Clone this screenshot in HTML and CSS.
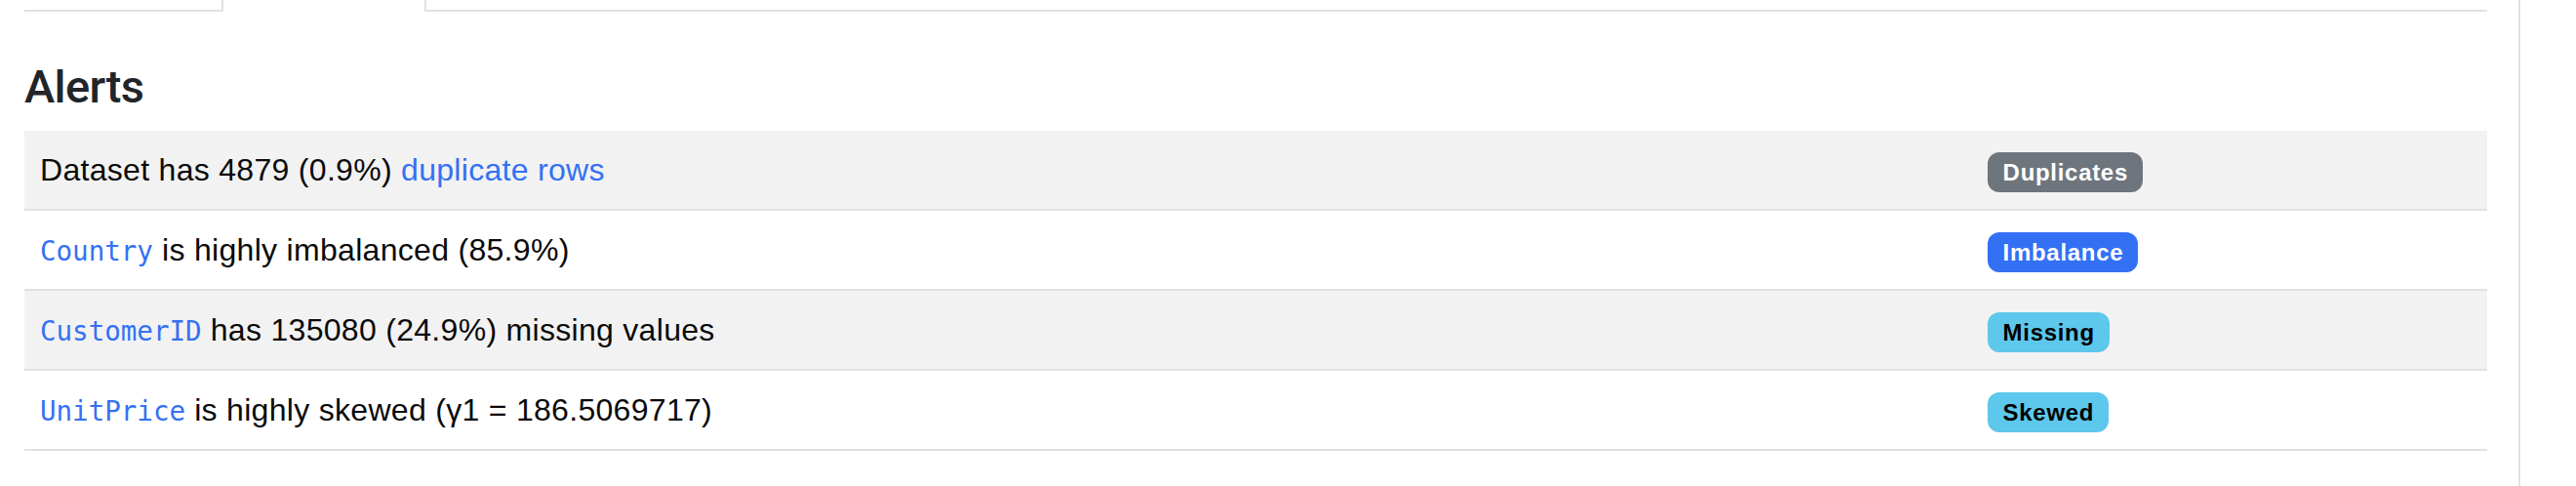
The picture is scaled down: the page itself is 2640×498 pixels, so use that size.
FILE: index.html
```html
<!DOCTYPE html>
<html lang="en">
<head>
<meta charset="utf-8">
<title>Alerts</title>
<link rel="stylesheet" href="styles.css">
</head>
<body>
<div class="page">
  <main class="main">
    <div class="tabs">
      <div class="tab"></div>
      <div class="tab active"></div>
      <div class="tab rest"></div>
    </div>
    <h2 class="title">Alerts</h2>
    <div class="alerts">
      <div class="row odd">
        <div class="msg">Dataset has 4879 (0.9%) <a class="link" href="#">duplicate rows</a></div>
        <div class="tag"><span class="badge gray">Duplicates</span></div>
      </div>
      <div class="row">
        <div class="msg"><a class="link" href="#"><code class="code">Country</code></a> is highly imbalanced (85.9%)</div>
        <div class="tag"><span class="badge blue">Imbalance</span></div>
      </div>
      <div class="row odd">
        <div class="msg"><a class="link" href="#"><code class="code">CustomerID</code></a> has 135080 (24.9%) missing values</div>
        <div class="tag"><span class="badge info">Missing</span></div>
      </div>
      <div class="row">
        <div class="msg"><a class="link" href="#"><code class="code">UnitPrice</code></a> is highly skewed (γ1 = 186.5069717)</div>
        <div class="tag"><span class="badge info">Skewed</span></div>
      </div>
    </div>
  </main>
  <div class="divider"></div>
</div>
</body>
</html>
```

FILE: styles.css
```css
html, body {
  margin: 0;
  padding: 0;
  background: #ffffff;
}

body {
  font-family: "Liberation Sans", Arial, sans-serif;
  color: #0a0a0a;
  height: 498px;
  overflow: hidden;
}

.page {
  display: flex;
  height: 498px;
}

.main {
  width: 2524px;
  margin-left: 25px;
  flex: none;
}

.divider {
  width: 2px;
  margin-left: 32px;
  background: #dee2e6;
  flex: none;
}

.tabs {
  display: flex;
  height: 12px;
}

.tab {
  box-sizing: border-box;
  width: 202px;
  border-bottom: 2px solid #dee2e6;
}

.tab.active {
  width: 210px;
  border-bottom: none;
  border-left: 2px solid #dee2e6;
  border-right: 2px solid #dee2e6;
}

.tab.rest {
  flex: 1;
  width: auto;
}

.title {
  margin: 48px 0 16px;
  font-family: Roboto, "Liberation Sans", sans-serif;
  font-size: 47px;
  line-height: 57.6px;
  height: 57.6px;
  font-weight: 500;
  color: #212529;
  letter-spacing: -0.6px;
}

.row {
  display: grid;
  grid-template-columns: 1fr 528px;
  border-bottom: 2px solid #dee2e6;
}

.row.odd {
  background: #f2f2f2;
}

.msg, .tag {
  padding: 16px;
  height: 48px;
  font-size: 32px;
  line-height: 48px;
  letter-spacing: 0.3px;
}

.link {
  color: #3371f2;
  text-decoration: none;
}

.code {
  font-family: "DejaVu Sans Mono", "Liberation Mono", monospace;
  font-size: 27.5px;
  line-height: 1;
  letter-spacing: 0;
}

.badge {
  display: inline-block;
  font-size: 24px;
  font-weight: 700;
  line-height: 1;
  padding: 8.4px 14.9px 8.4px 15.6px;
  border-radius: 12px;
  letter-spacing: 0.7px;
  vertical-align: baseline;
}

.badge.gray {
  background: #6e757c;
  color: #ffffff;
}

.badge.blue {
  background: #3370f4;
  color: #ffffff;
}

.badge.info {
  background: #5ec8ec;
  color: #000000;
}
```
